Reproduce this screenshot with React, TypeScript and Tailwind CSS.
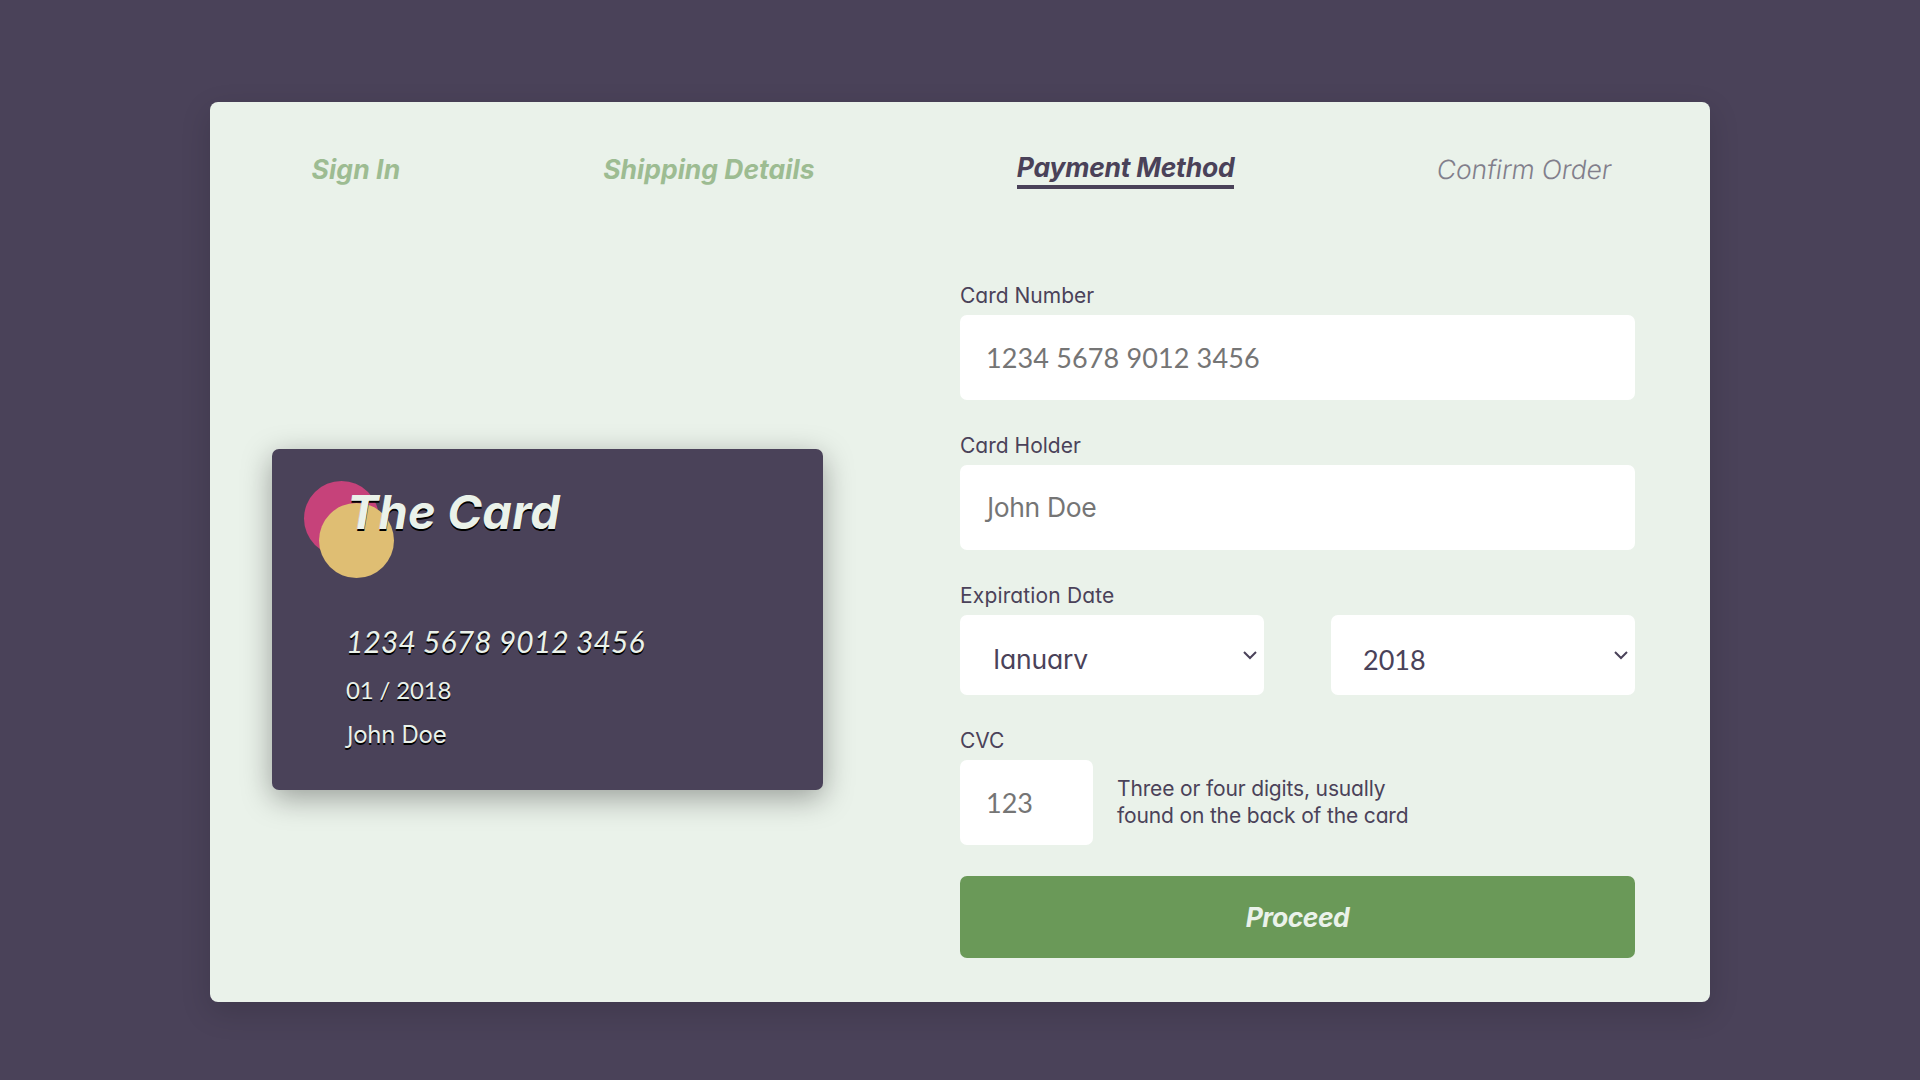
import type { ReactNode } from "react";

const inter = "font-['Inter',sans-serif] [font-feature-settings:'cv11']";

function Jay() {
  return <span className="font-['Noto_Sans',sans-serif] leading-none">J</span>;
}

function Chevron() {
  return (
    <svg width="16" height="12" viewBox="0 0 16 12" fill="none" className="shrink-0">
      <path d="M2 2 L8 8 L14 2" stroke="#4a4259" strokeWidth="2" />
    </svg>
  );
}

function Label({ children }: { children: ReactNode }) {
  return (
    <div className="h-9 pt-0.5 text-[21px] leading-[30px] text-[#4a4259]">{children}</div>
  );
}

function Select({ children }: { children: ReactNode }) {
  return (
    <div className="flex h-20 w-[304px] items-start justify-between rounded-[7px] bg-white pr-1.5 text-[#4a4259]">
      {children}
      <div className="mt-[35px]">
        <Chevron />
      </div>
    </div>
  );
}

export default function App() {
  return (
    <div className={`flex h-[1080px] w-[1920px] items-start justify-center overflow-hidden bg-[#4a4259] pt-[102px] ${inter}`}>
      <div className="flex h-[900px] w-[1500px] flex-col rounded-[8px] bg-[#eaf2ea] shadow-[0_10px_30px_rgba(0,0,0,0.15)]">
        <nav className="mt-12 flex h-[39px] shrink-0 items-center justify-around text-[26.5px] leading-[34px] font-bold whitespace-nowrap italic">
          <span className="w-[88.5px] pb-0.5 tracking-[0.1px] text-[#6a9958] opacity-60">Sign In</span>
          <span className="w-[210.5px] pb-0.5 text-[#6a9958] opacity-60">Shipping Details</span>
          <span className="h-[39px] w-[217px] border-b-4 border-[#4a4259] tracking-[-0.25px] text-[#4a4259]">Payment Method</span>
          <span className="w-[171.5px] -skew-x-8 pb-0.5 text-[26.5px] font-light tracking-[-0.15px] text-[#4a4259] not-italic opacity-65">Confirm Order</span>
        </nav>

        <main className="flex flex-1 justify-between pr-[75px] pl-[62px]">
          <section className="mt-[260px] h-[341px] w-[551px] rounded-[7px] bg-[#4a4259] text-[#eaf2ea] shadow-[0_8px_30px_rgba(0,0,0,0.35)] [text-shadow:0_2px_0_#000]">
            <div className="relative h-[150px]">
              <div className="absolute top-8 left-8 size-[75px] rounded-full bg-[#c6427a]" />
              <div className="absolute top-[54px] left-[47px] size-[75px] rounded-full bg-[#dfbe73]" />
              <h1 className="relative pt-[33px] pl-[75px] text-[47px] leading-[60px] font-bold tracking-[0.2px] whitespace-nowrap italic">The Card</h1>
            </div>
            <div className="flex flex-col pt-[22px] pl-[74px] whitespace-nowrap">
              <div className="font-['Lato',sans-serif] text-[30px] leading-10 tracking-[0.1px] italic">1234 5678 9012 3456</div>
              <div className="mt-[13px] font-['Lato',sans-serif] text-[24px] leading-8 tracking-[-0.15px]">01 / 2018</div>
              <div className="mt-[13px] pl-px text-[24px] leading-8 tracking-[-0.3px]"><Jay />ohn Doe</div>
            </div>
          </section>

          <form className="mt-[90px] flex w-[675px] flex-col whitespace-nowrap">
            <Label>Card Number</Label>
            <div className="mb-[29px] h-[85px] rounded-[7px] bg-white pl-[26px] font-['Lato',sans-serif] text-[27px] leading-[85px] tracking-[0.13px] text-[#757575]">1234 5678 9012 3456</div>
            <Label>Card Holder</Label>
            <div className="mb-[29px] h-[85px] rounded-[7px] bg-white pl-[27px] text-[26.5px] leading-[85px] tracking-[-0.4px] text-[#757575]"><Jay />ohn Doe</div>
            <Label><span className="tracking-[0.15px]">Expiration Date</span></Label>
            <div className="mb-[29px] flex justify-between">
              <Select>
                <div className="mt-[27px] h-[27px] overflow-hidden pl-[33px] text-[26.5px] leading-[34px] tracking-[-0.2px]"><Jay />anuary</div>
              </Select>
              <Select>
                <div className="mt-[27px] h-[27px] pl-8 font-['Lato',sans-serif] text-[27px] leading-[35px]">2018</div>
              </Select>
            </div>
            <Label>CVC</Label>
            <div className="mb-[31px] flex items-center">
              <div className="h-[85px] w-[133px] rounded-[7px] bg-white pl-[26px] font-['Lato',sans-serif] text-[27px] leading-[85px] text-[#757575]">123</div>
              <div className="ml-6 pb-0.5 text-[21px] leading-[27px] tracking-[-0.15px] text-[#4a4259]">
                Three or four digits, usually
                <br />
                found on the back of the card
              </div>
            </div>
            <button type="button" className="h-[82px] rounded-[7px] bg-[#6a9958] pt-0.5 text-[26.5px] font-bold tracking-[-0.5px] text-[#eaf2ea] italic">Proceed</button>
          </form>
        </main>
      </div>
    </div>
  );
}
